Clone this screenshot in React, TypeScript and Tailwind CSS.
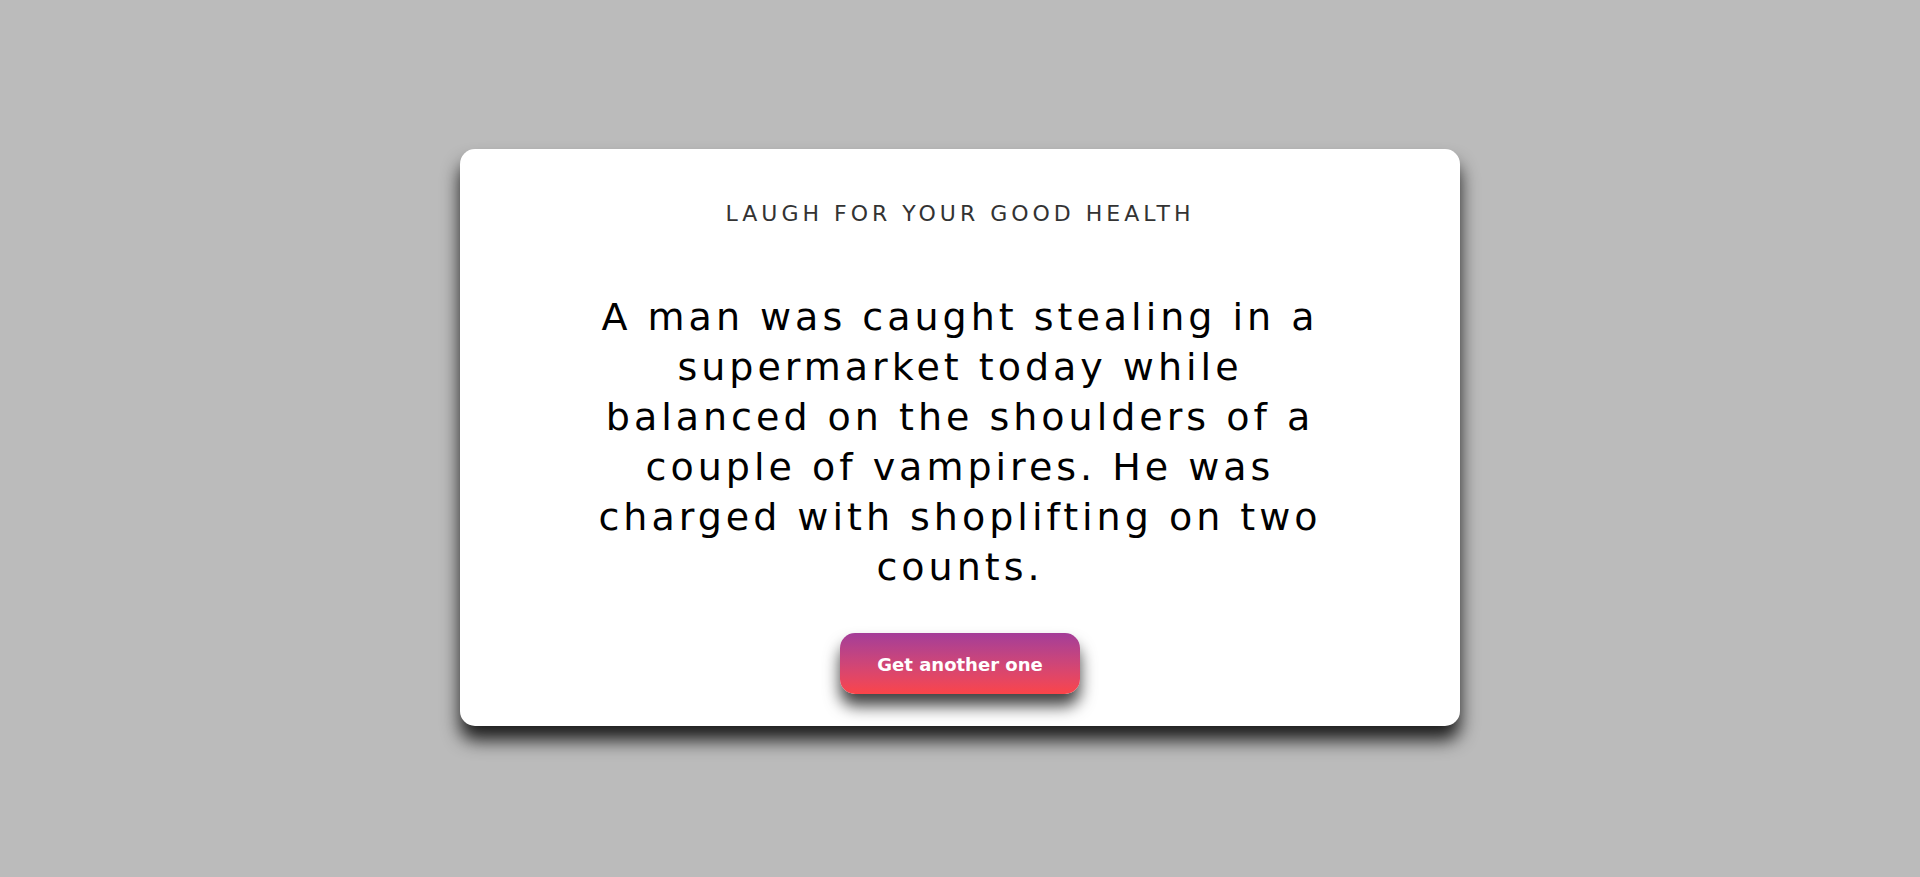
import React from "react";

export default function App() {
  return (
    <div
      className="w-full h-[877px] bg-[#bbbbbb] flex items-center justify-center"
      style={{ fontFamily: '"DejaVu Sans", Verdana, sans-serif' }}
    >
      <div className="w-[1000px] h-[577px] mb-[2px] bg-white rounded-[15px] shadow-[0_14px_18px_rgba(0,0,0,0.85)] flex flex-col items-center pt-[51px]">
        <h1 className="text-[22px] leading-[28px] tracking-[4px] text-[#333333] font-normal uppercase">
          Laugh for your good health
        </h1>
        <p className="mt-[64px] w-[752px] text-center text-[38px] leading-[50px] tracking-[4px] text-black">
          A man was caught stealing in a supermarket today while balanced on the shoulders of a couple of vampires. He was charged with shoplifting on two counts.
        </p>
        <button className="mt-[41px] w-[240px] h-[61px] rounded-[15px] bg-gradient-to-b from-[#a43c98] to-[#fb4448] text-white font-bold text-[18px] pt-[1px] shadow-[0_12px_16px_rgba(0,0,0,0.75)]">
          Get another one
        </button>
      </div>
    </div>
  );
}
